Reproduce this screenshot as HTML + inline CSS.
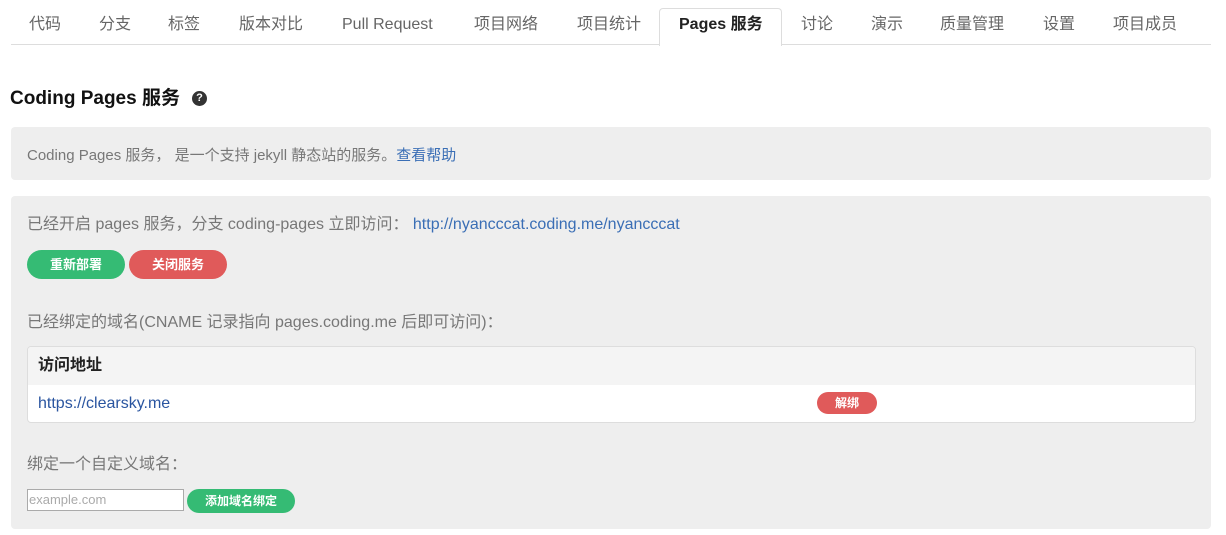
<!DOCTYPE html>
<html><head><meta charset="utf-8"><style>
body{margin:0;width:1226px;height:535px;background:#fff;font-family:"Liberation Sans","Noto Sans CJK SC",sans-serif;position:relative;overflow:hidden;color:#555}
.a{position:absolute;white-space:nowrap}
.tab{position:absolute;top:15px;font-size:16px;color:#666;line-height:20px}
.btn{position:absolute;color:#fff;font-weight:bold;font-size:13px;text-align:center;border-radius:15px}
</style></head><body>
<div class="a" style="left:11px;top:44px;width:1200px;height:1px;background:#ddd"></div>
<div class="a" style="left:659px;top:8px;width:121px;height:37px;border:1px solid #ddd;border-bottom:none;border-radius:4px 4px 0 0;background:#fff"></div>
<div class="tab" style="left:29px">代码</div>
<div class="tab" style="left:99px">分支</div>
<div class="tab" style="left:168px">标签</div>
<div class="tab" style="left:239px">版本对比</div>
<div class="tab" style="left:342px">Pull Request</div>
<div class="tab" style="left:474px">项目网络</div>
<div class="tab" style="left:577px">项目统计</div>
<div class="tab" style="left:679px;color:#222;font-weight:bold">Pages 服务</div>
<div class="tab" style="left:801px">讨论</div>
<div class="tab" style="left:871px">演示</div>
<div class="tab" style="left:940px">质量管理</div>
<div class="tab" style="left:1043px">设置</div>
<div class="tab" style="left:1113px">项目成员</div>

<div class="a" style="left:10px;top:87px;font-size:19px;line-height:24px;font-weight:bold;color:#111">Coding Pages 服务</div>
<div class="a" style="left:192px;top:91px;width:15px;height:15px;border-radius:50%;background:#333;color:#fff;font-size:11px;font-weight:bold;text-align:center;line-height:15px">?</div>

<div class="a" style="left:11px;top:127px;width:1200px;height:53px;background:#eee;border-radius:4px"></div>
<div class="a" style="left:27px;top:144px;font-size:15px;color:#777">Coding Pages 服务， 是一个支持 jekyll 静态站的服务。<span style="color:#3a6eb5">查看帮助</span></div>

<div class="a" style="left:11px;top:196px;width:1200px;height:333px;background:#eee;border-radius:4px"></div>
<div class="a" style="left:27px;top:210px;font-size:16px;color:#777">已经开启 pages 服务，分支 coding-pages 立即访问： <span style="color:#3a6eb5">http://nyancccat.coding.me/nyancccat</span></div>
<div class="btn" style="left:27px;top:250px;width:98px;height:29px;line-height:29px;background:#35bb74">重新部署</div>
<div class="btn" style="left:129px;top:250px;width:98px;height:29px;line-height:29px;background:#e05a5a">关闭服务</div>
<div class="a" style="left:27px;top:308px;font-size:16px;color:#777">已经绑定的域名(CNAME 记录指向 pages.coding.me 后即可访问)：</div>

<div class="a" style="left:27px;top:346px;width:1167px;height:75px;border:1px solid #ddd;border-radius:4px;background:#fff;overflow:hidden">
<div style="height:38px;background:#f4f4f4;font-weight:bold;font-size:16px;color:#222;line-height:38px;padding-left:10px">访问地址</div>
<div style="font-size:16px;color:#2a55a0;line-height:37px;padding-left:10px">https://clearsky.me</div>
</div>
<div class="btn" style="left:817px;top:392px;width:60px;height:22px;line-height:22px;font-size:12px;background:#e05a5a;border-radius:11px">解绑</div>

<div class="a" style="left:27px;top:450px;font-size:16px;color:#777">绑定一个自定义域名：</div>
<div class="a" style="left:27px;top:489px;width:154px;height:20px;border:1px solid #aaa;background:#fff;font-size:13px;color:#aaa;line-height:20px;padding-left:1px">example.com</div>
<div class="btn" style="left:187px;top:489px;width:108px;height:24px;line-height:24px;font-size:12px;background:#35bb74;border-radius:12px">添加域名绑定</div>
</body></html>
